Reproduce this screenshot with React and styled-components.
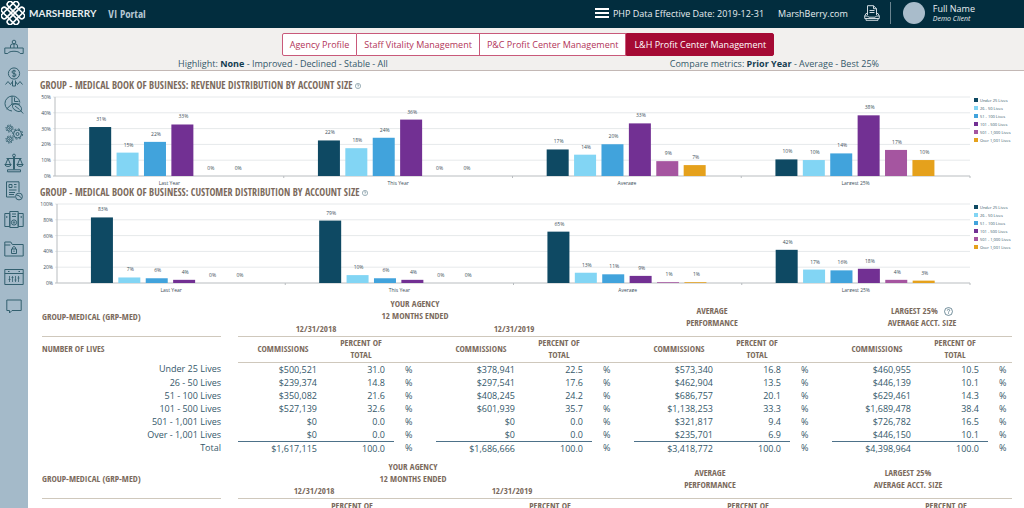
import React from "react";
import styled, { createGlobalStyle } from "styled-components";

const SERIES = [
  { name: "Under 25 Lives", color: "#0e4963" },
  { name: "26 - 50 Lives", color: "#82d5f4" },
  { name: "51 - 100 Lives", color: "#41a3dc" },
  { name: "101 - 500 Lives", color: "#723093" },
  { name: "501 - 1,000 Lives", color: "#a555a0" },
  { name: "Over 1,001 Lives", color: "#e5a11c" },
];

const REVENUE = [
  { name: "Last Year", values: [31, 14.8, 21.6, 32.6, 0, 0], labels: [31, 15, 22, 33, 0, 0] },
  { name: "This Year", values: [22.5, 17.6, 24.2, 35.7, 0, 0], labels: [22, 18, 24, 36, 0, 0] },
  { name: "Average", values: [16.8, 13.5, 20.1, 33.3, 9.4, 6.9], labels: [17, 14, 20, 33, 9, 7] },
  { name: "Largest 25%", values: [10.5, 10.1, 14.3, 38.4, 16.5, 10.1], labels: [10, 10, 14, 38, 17, 10] },
];

const CUSTOMERS = [
  { name: "Last Year", values: [83, 7, 6, 4, 0, 0], labels: [83, 7, 6, 4, 0, 0] },
  { name: "This Year", values: [79, 10, 6, 4, 0, 0], labels: [79, 10, 6, 4, 0, 0] },
  { name: "Average", values: [65, 13, 11, 9, 1, 1], labels: [65, 13, 11, 9, 1, 1] },
  { name: "Largest 25%", values: [42, 17, 16, 18, 4, 3], labels: [42, 17, 16, 18, 4, 3] },
];

const ROWS = [
  ["Under 25 Lives", "$500,521", "31.0", "$378,941", "22.5", "$573,340", "16.8", "$460,955", "10.5"],
  ["26 - 50 Lives", "$239,374", "14.8", "$297,541", "17.6", "$462,904", "13.5", "$446,139", "10.1"],
  ["51 - 100 Lives", "$350,082", "21.6", "$408,245", "24.2", "$686,757", "20.1", "$629,461", "14.3"],
  ["101 - 500 Lives", "$527,139", "32.6", "$601,939", "35.7", "$1,138,253", "33.3", "$1,689,478", "38.4"],
  ["501 - 1,001 Lives", "$0", "0.0", "$0", "0.0", "$321,817", "9.4", "$726,782", "16.5"],
  ["Over - 1,001 Lives", "$0", "0.0", "$0", "0.0", "$235,701", "6.9", "$446,150", "10.1"],
  ["Total", "$1,617,115", "100.0", "$1,686,666", "100.0", "$3,418,772", "100.0", "$4,398,964", "100.0"],
];

const TABS = [
  "Agency Profile",
  "Staff Vitality Management",
  "P&C Profit Center Management",
  "L&H Profit Center Management",
];

const ICONS = [
  {
    name: "Front desk",
    art: (
      <>
        <circle cx="10" cy="4" r="1.8" />
        <path d="M6.5 10V8q0-2 2-2h3q2 0 2 2v2M10 6v4" />
        <path d="M.8 10h18.400v5.500h-3c-1-3-11.400-3-12.400 0h-3z" />
      </>
    ),
  },
  {
    name: "Investments",
    art: (
      <>
        <circle cx="10" cy="6.500" r="5.600" />
        <path d="M12 4.600q-.6-1-2-1-2 0-2 1.400T10 6.500t2 1.500-2 1.400q-1.400 0-2-1M10 2.700v7.600" />
        <path d="M8.500 13.500v5.500h3v-5.500M1.500 17.500l2.500-3 2.500 3 2-3M18.500 17.500l-2.500-3-2.500 3-2-3" />
      </>
    ),
  },
  {
    name: "Analysis",
    art: (
      <>
        <path d="M8 16a7.500 7.500 0 1 1 7.900-8.500" />
        <path d="M8 1v8h8M8 9l-5.500 5M10.500 2.500v4h4" />
        <ellipse cx="13" cy="12.500" rx="5" ry="3.200" transform="rotate(35 13 12.500)" />
        <path d="M16.500 15.500l2.700 3M11 11l4.500 3.500" />
      </>
    ),
  },
  {
    name: "Operations",
    art: (
      <>
        <circle cx="5.500" cy="4.500" r="2.600" />
        <circle cx="5.500" cy="4.500" r="3.600" strokeDasharray="1.300 1.530" />
        <circle cx="5.500" cy="4.500" r=".8" />
        <circle cx="5.500" cy="15.500" r="2.600" />
        <circle cx="5.500" cy="15.500" r="3.600" strokeDasharray="1.300 1.530" />
        <circle cx="5.500" cy="15.500" r=".8" />
        <circle cx="13.500" cy="10" r="4" />
        <circle cx="13.500" cy="10" r="5.100" strokeDasharray="2 2" />
        <circle cx="13.500" cy="10" r="1.500" />
      </>
    ),
  },
  {
    name: "Balance",
    art: (
      <>
        <circle cx="10" cy="2.500" r="1.400" />
        <path d="M9.500 4v12.500M10.500 4v12.500M2.500 5.500h15M4 5.500l-2.500 6M4 5.500l2.500 6M16 5.500l-2.500 6M16 5.500l2.500 6" />
        <path d="M.8 11.500h6.400q-.5 2-3.200 2t-3.200-2zM12.800 11.500h6.400q-.5 2-3.200 2t-3.200-2zM3.500 18.800h13v-2h-13z" />
      </>
    ),
  },
  {
    name: "Reports",
    art: (
      <>
        <path d="M11 16H2.500V.8h12.500V11M5 3.500h3v3H5zM10 3.500h2.500M10 6h2.500M5 9h7.500M5 11.500h6M5 13.500h5" />
        <circle cx="15" cy="15.500" r="3.400" />
        <path d="M12.500 14q2.500 0 5 3" />
      </>
    ),
  },
  {
    name: "Files",
    art: (
      <>
        <path d="M.8 3.500h5v13h-5zM14.200 3.500h5v13h-5zM5.800 1.500h8.400v16H5.800zM8 4h4M8 6.500h4M2.800 6v2M17.200 6v2" />
        <circle cx="10" cy="12.500" r="2.600" />
        <circle cx="10" cy="12.500" r=".8" />
      </>
    ),
  },
  {
    name: "Secure folder",
    art: (
      <>
        <path d="M.8 17V3h6l1.500 2.500h10.900V17zM.8 6h5.500" />
        <path d="M7.500 10h5v4.500h-5zM8.500 10V8.500q1.500-2 3 0V10M10 11.500v1.500" />
      </>
    ),
  },
  {
    name: "Calendar",
    art: (
      <>
        <path d="M.8 2.500h18.400v15H.8zM.8 6.500h18.400M4 4.500h1.500M14.500 4.500H16" />
        <path d="M5.500 9v6M8.500 9v6M11.500 9v6M14.500 9v6M4.500 12.500h2M7.500 10.500h2M10.500 13h2M13.500 11h2" strokeWidth=".8" />
      </>
    ),
  },
  {
    name: "Messages",
    art: <path d="M2.800 4h14.400v10.500H8L5.500 17v-2.500H2.800z" />,
  },
];

const Logo = () => (
  <svg width="24" height="24" viewBox="-12 -12 24 24" fill="none" stroke="#fff" strokeWidth="1.600" aria-hidden="true">
    <g transform="rotate(45)">
      <rect x="-11" y="-6.800" width="22" height="5.400" rx="2.400" />
      <rect x="-11" y="1.400" width="22" height="5.400" rx="2.400" />
      <rect x="-6.800" y="-11" width="5.400" height="22" rx="2.400" />
      <rect x="1.400" y="-11" width="5.400" height="22" rx="2.400" />
    </g>
  </svg>
);

const PrinterIcon = () => (
  <svg width="16" height="16" viewBox="0 0 16 16" fill="none" stroke="#cfd9df" strokeWidth="1" aria-hidden="true">
    <path d="M3.500 10V.7h6l3 3V10M9.500.7v3h3M5.500 5.500h5M5.500 7.500h5M3.500 8.500H2L.7 11v2.500h14.600V11L14 8.500h-1.500M.7 11h3l1 1.200h6.600l1-1.200h3M2 13.500v1.800h12v-1.800" />
  </svg>
);

const HelpIcon = ({ size }) => (
  <svg width={size} height={size} viewBox="0 0 10 10" fill="none" stroke="#3f6576" strokeWidth=".8" aria-hidden="true">
    <circle cx="5" cy="5" r="4.400" />
    <path d="M3.700 4q0-1.400 1.300-1.400T6.300 4Q6.300 4.600 5 5.400v.8M5 7v.8" />
  </svg>
);

const Chart = ({ title, groups, max, left }) => {
  const top = 5;
  const base = 84;
  const right = 930;
  const groupWidth = (right - left) / groups.length;
  const slot = 27.4;
  const y = (v) => base - (v / max) * (base - top);
  const ticks = [0, 1, 2, 3, 4, 5].map((i) => (max / 5) * i);

  return (
    <section>
      <ChartTitle>
        {title} <HelpIcon size={6} />
      </ChartTitle>
      <ChartBody>
        <Plot viewBox="0 0 932 93" role="img" aria-label={title}>
          {ticks.map((t) => (
            <g key={t}>
              <line x1={left - 2} x2={right} y1={y(t)} y2={y(t)} stroke={t ? "#e6e9eb" : "#b9bdc0"} />
              <text x={left - 4} y={y(t) + 2} textAnchor="end">
                {t}%
              </text>
            </g>
          ))}
          <line x1={left} x2={left} y1={top} y2={base} stroke="#b9bdc0" />
          {groups.map((g, i) => {
            const x0 = left + i * groupWidth + (groupWidth - slot * 6) / 2;
            return (
              <g key={g.name}>
                {g.values.map((v, k) => (
                  <g key={SERIES[k].name}>
                    <rect x={x0 + k * slot + 2} width="22" y={y(v)} height={base - y(v)} fill={SERIES[k].color} />
                    <text x={x0 + k * slot + 14} y={y(v) - 6} textAnchor="middle">
                      {g.labels[k]}%
                    </text>
                  </g>
                ))}
                <text x={x0 + slot * 3} y={base + 9} textAnchor="middle">
                  {g.name}
                </text>
                <line x1={left + (i + 1) * groupWidth} x2={left + (i + 1) * groupWidth} y1={base} y2={base + 2} stroke="#b9bdc0" />
              </g>
            );
          })}
        </Plot>
        <Legend>
          {SERIES.map((s) => (
            <LegendItem key={s.name}>
              <Swatch $color={s.color} />
              {s.name}
            </LegendItem>
          ))}
        </Legend>
      </ChartBody>
    </section>
  );
};

const MetricsTable = ({ rows = [], commissions, percent, unit, lastUnit, wideLast, help }) => (
  <Table>
    <colgroup>
      <Col $w={179} />
      <Col $w={17} />
      {[unit, unit, unit, lastUnit].map((u, i) => (
        <React.Fragment key={i}>
          <Col $w={commissions} />
          <Col $w={percent} />
          <Col $w={u} />
        </React.Fragment>
      ))}
    </colgroup>
    <thead>
      <tr>
        <RowHead rowSpan="2" $line>
          GROUP-MEDICAL (GRP-MED)
        </RowHead>
        <td rowSpan="2" />
        <Head colSpan="5">
          YOUR AGENCY
          <br />
          12 MONTHS ENDED
        </Head>
        <Head rowSpan="2" $line />
        <Head rowSpan="2" colSpan="2" $line>
          AVERAGE
          <br />
          PERFORMANCE
        </Head>
        <Head rowSpan="2" $line />
        <Head rowSpan="2" colSpan={wideLast ? 3 : 2} $line>
          LARGEST 25%{" "}
          {help && (
            <HelpMark>
              <HelpIcon size={9} />
            </HelpMark>
          )}
          <br />
          AVERAGE ACCT. SIZE
        </Head>
        {!wideLast && <Head rowSpan="2" $line />}
      </tr>
      <DateRow>
        <Head colSpan="2" $line>
          12/31/2018
        </Head>
        <Head $line />
        <Head colSpan="2" $line>
          12/31/2019
        </Head>
      </DateRow>
      <SubHeadRow>
        <RowHead>NUMBER OF LIVES</RowHead>
        <td />
        {[0, 1, 2, 3].map((i) => (
          <React.Fragment key={i}>
            <Head $line>COMMISSIONS</Head>
            <Head $line>
              PERCENT OF
              <br />
              TOTAL
            </Head>
            <Head $line />
          </React.Fragment>
        ))}
      </SubHeadRow>
    </thead>
    <tbody>
      {rows.map((row) => {
        const total = row[0] === "Total";
        return (
          <tr key={row[0]}>
            <Label scope="row">{row[0]}</Label>
            <td />
            {[1, 3, 5, 7].map((i) => (
              <React.Fragment key={i}>
                <Amount $total={total}>{row[i]}</Amount>
                <Amount $total={total} $percent>
                  {row[i + 1]}
                </Amount>
                <Unit>%</Unit>
              </React.Fragment>
            ))}
          </tr>
        );
      })}
    </tbody>
  </Table>
);

export default function App() {
  const [tab, setTab] = React.useState(TABS[3]);
  return (
    <Shell>
      <GlobalStyle />
      <Header>
        <Logo />
        <Wordmark>MARSHBERRY</Wordmark>
        <Portal>VI Portal</Portal>
        <MenuButton aria-label="Menu">
          <span />
          <span />
          <span />
        </MenuButton>
        <Effective>PHP Data Effective Date: 2019-12-31</Effective>
        <SiteLink href="#">MarshBerry.com</SiteLink>
        <PrintButton aria-label="Print">
          <PrinterIcon />
        </PrintButton>
        <Divider />
        <Avatar />
        <User>
          <UserName>Full Name</UserName>
          <UserRole>Demo Client</UserRole>
        </User>
      </Header>
      <Body>
        <Sidebar>
          <SideLinks>
            {ICONS.map((icon) => (
              <SideLink key={icon.name} href="#" aria-label={icon.name}>
                <svg width="20" height="20" viewBox="0 0 20 20" fill="none" stroke="#33606f" strokeWidth="1">
                  {icon.art}
                </svg>
              </SideLink>
            ))}
          </SideLinks>
        </Sidebar>
        <Main>
          <Toolbar>
            <Tabs>
              {TABS.map((t) => (
                <Tab key={t} $active={t === tab} onClick={() => setTab(t)}>
                  {t}
                </Tab>
              ))}
            </Tabs>
            <Filters>
              <span>
                Highlight: <b>None</b> - Improved - Declined - Stable - All
              </span>
              <span>
                Compare metrics: <b>Prior Year</b> - Average - Best 25%
              </span>
            </Filters>
          </Toolbar>
          <Content>
            <Chart title="GROUP - MEDICAL BOOK OF BUSINESS: REVENUE DISTRIBUTION BY ACCOUNT SIZE" groups={REVENUE} max={50} left={15} />
            <Chart title="GROUP - MEDICAL BOOK OF BUSINESS: CUSTOMER DISTRIBUTION BY ACCOUNT SIZE" groups={CUSTOMERS} max={100} left={17} />
            <Tables>
              <MetricsTable rows={ROWS} commissions={90} percent={66} unit={42} lastUnit={24} wideLast help />
              <MetricsTable commissions={76} percent={76} unit={46} lastUnit={28} />
            </Tables>
          </Content>
        </Main>
      </Body>
    </Shell>
  );
}

//styled-components

const condensed = `"Open Sans Condensed", "Liberation Sans Narrow", "Open Sans", sans-serif`;

const GlobalStyle = createGlobalStyle`
  * {
    box-sizing: border-box;
  }
  html {
    scrollbar-width: none;
  }
  body {
    margin: 0;
    background: #fff;
    color: #34586a;
    font-family: "Open Sans", sans-serif;
    font-size: 9px;
  }
  button {
    font: inherit;
    cursor: pointer;
  }
`;

const Shell = styled.div`
  min-height: 100vh;
  display: flex;
  flex-direction: column;
`;

const Header = styled.header`
  flex: none;
  height: 28px;
  padding: 0 49px 2px 1px;
  display: flex;
  align-items: center;
  background: #022d3e;
  color: #e8eef1;
`;

const Wordmark = styled.span`
  margin-left: 4px;
  font-family: Lato, sans-serif;
  font-size: 10px;
  font-weight: bold;
`;

const Portal = styled.span`
  margin-left: 12px;
  color: #b4c6d2;
  font-family: ${condensed};
  font-size: 11px;
  font-weight: bold;
`;

const MenuButton = styled.button`
  margin-left: auto;
  width: 14px;
  padding: 0;
  border: none;
  background: none;
  display: grid;
  gap: 2px;
  & > span {
    height: 2px;
    background: #fff;
  }
`;

const Effective = styled.span`
  margin-left: 4px;
`;

const SiteLink = styled.a`
  margin-left: 14px;
  color: inherit;
  text-decoration: none;
`;

const PrintButton = styled.button`
  margin-left: 16px;
  padding: 0;
  border: none;
  background: none;
  display: flex;
`;

const Divider = styled.span`
  width: 1px;
  height: 22px;
  margin: 0 12px 0 10px;
  background: #6b8490;
`;

const Avatar = styled.span`
  width: 22px;
  height: 22px;
  border-radius: 50%;
  background: #a9bccb;
`;

const User = styled.div`
  margin-left: 8px;
  display: grid;
`;

const UserName = styled.span`
  line-height: 10px;
`;

const UserRole = styled.em`
  font-size: 7px;
  line-height: 9px;
`;

const Body = styled.div`
  flex: 1;
  display: flex;
`;

const Sidebar = styled.nav`
  flex: none;
  width: 28px;
  padding-top: 10px;
  background: #a4bac9;
`;

const SideLinks = styled.div`
  height: 278px;
  display: flex;
  flex-direction: column;
  align-items: center;
  justify-content: space-between;
`;

const SideLink = styled.a`
  display: flex;
`;

const Main = styled.main`
  flex: 1;
  min-width: 0;
`;

const Toolbar = styled.div`
  height: 43px;
  padding-top: 5px;
  background: #f2f0ee;
  border-bottom: 1px solid #c3b8b5;
`;

const Tabs = styled.div`
  padding-left: 4px;
  display: flex;
  justify-content: center;
`;

const Tab = styled.button`
  height: 23px;
  padding: 0 7px;
  border: 1px solid ${(p) => (p.$active ? "#a50a34" : "#c9597a")};
  border-left-width: ${(p) => (p.$active ? "1px" : "0")};
  background: ${(p) => (p.$active ? "#a50a34" : "#fff")};
  color: ${(p) => (p.$active ? "#fff" : "#b23358")};
  &:first-child {
    border-left-width: 1px;
    border-radius: 2px 0 0 2px;
  }
  &:last-child {
    border-radius: 0 2px 2px 0;
  }
`;

const Filters = styled.div`
  padding: 0 145px 0 150px;
  display: flex;
  justify-content: space-between;
  line-height: 16px;
  & b {
    color: #123c50;
  }
`;

const Content = styled.div`
  padding: 7px 0 0 12px;
`;

const ChartTitle = styled.h2`
  margin: 0;
  height: 14px;
  color: #7b6a5c;
  font-family: ${condensed};
  font-size: 10px;
  font-weight: bold;
  line-height: 14px;
`;

const ChartBody = styled.div`
  display: flex;
`;

const Plot = styled.svg`
  flex: 1;
  min-width: 0;
  & text {
    font-size: 5px;
    fill: #3d4f5a;
  }
`;

const Legend = styled.ul`
  width: 52px;
  margin: 0;
  padding: 4px 0 0 2px;
  list-style: none;
`;

const LegendItem = styled.li`
  display: flex;
  align-items: center;
  gap: 2px;
  height: 8px;
  font-size: 4px;
  white-space: nowrap;
`;

const Swatch = styled.span`
  width: 4px;
  height: 4px;
  background: ${(p) => p.$color};
`;

const Tables = styled.div`
  padding: 6px 12px 0 2px;
  display: grid;
  gap: 6px;
`;

const Table = styled.table`
  width: 100%;
  table-layout: fixed;
  border-collapse: collapse;
  & td,
  & th {
    padding: 0;
  }
`;

const Col = styled.col`
  width: ${(p) => p.$w}px;
`;

const Head = styled.th`
  color: #7b6a5c;
  font-family: ${condensed};
  font-size: 9px;
  line-height: 12px;
  white-space: nowrap;
  border-bottom: ${(p) => (p.$line ? "1px solid #cfc8bc" : "none")};
`;

const RowHead = styled(Head)`
  text-align: left;
`;

const HelpMark = styled.span`
  display: inline-block;
  margin-left: 4px;
  height: 9px;
  vertical-align: middle;
  line-height: 9px;
`;

const DateRow = styled.tr`
  height: 14px;
`;

const SubHeadRow = styled.tr`
  height: 26px;
`;

const Label = styled.th`
  text-align: right;
  font-weight: normal;
  line-height: 13px;
`;

const Amount = styled.td`
  text-align: right;
  line-height: 13px;
  border-top: ${(p) => (p.$total ? "1px solid #4d7189" : "none")};
  && {
    padding-right: ${(p) => (p.$percent ? "9px" : "11px")};
  }
`;

const Unit = styled.td`
  line-height: 13px;
  && {
    padding-left: 11px;
  }
`;
